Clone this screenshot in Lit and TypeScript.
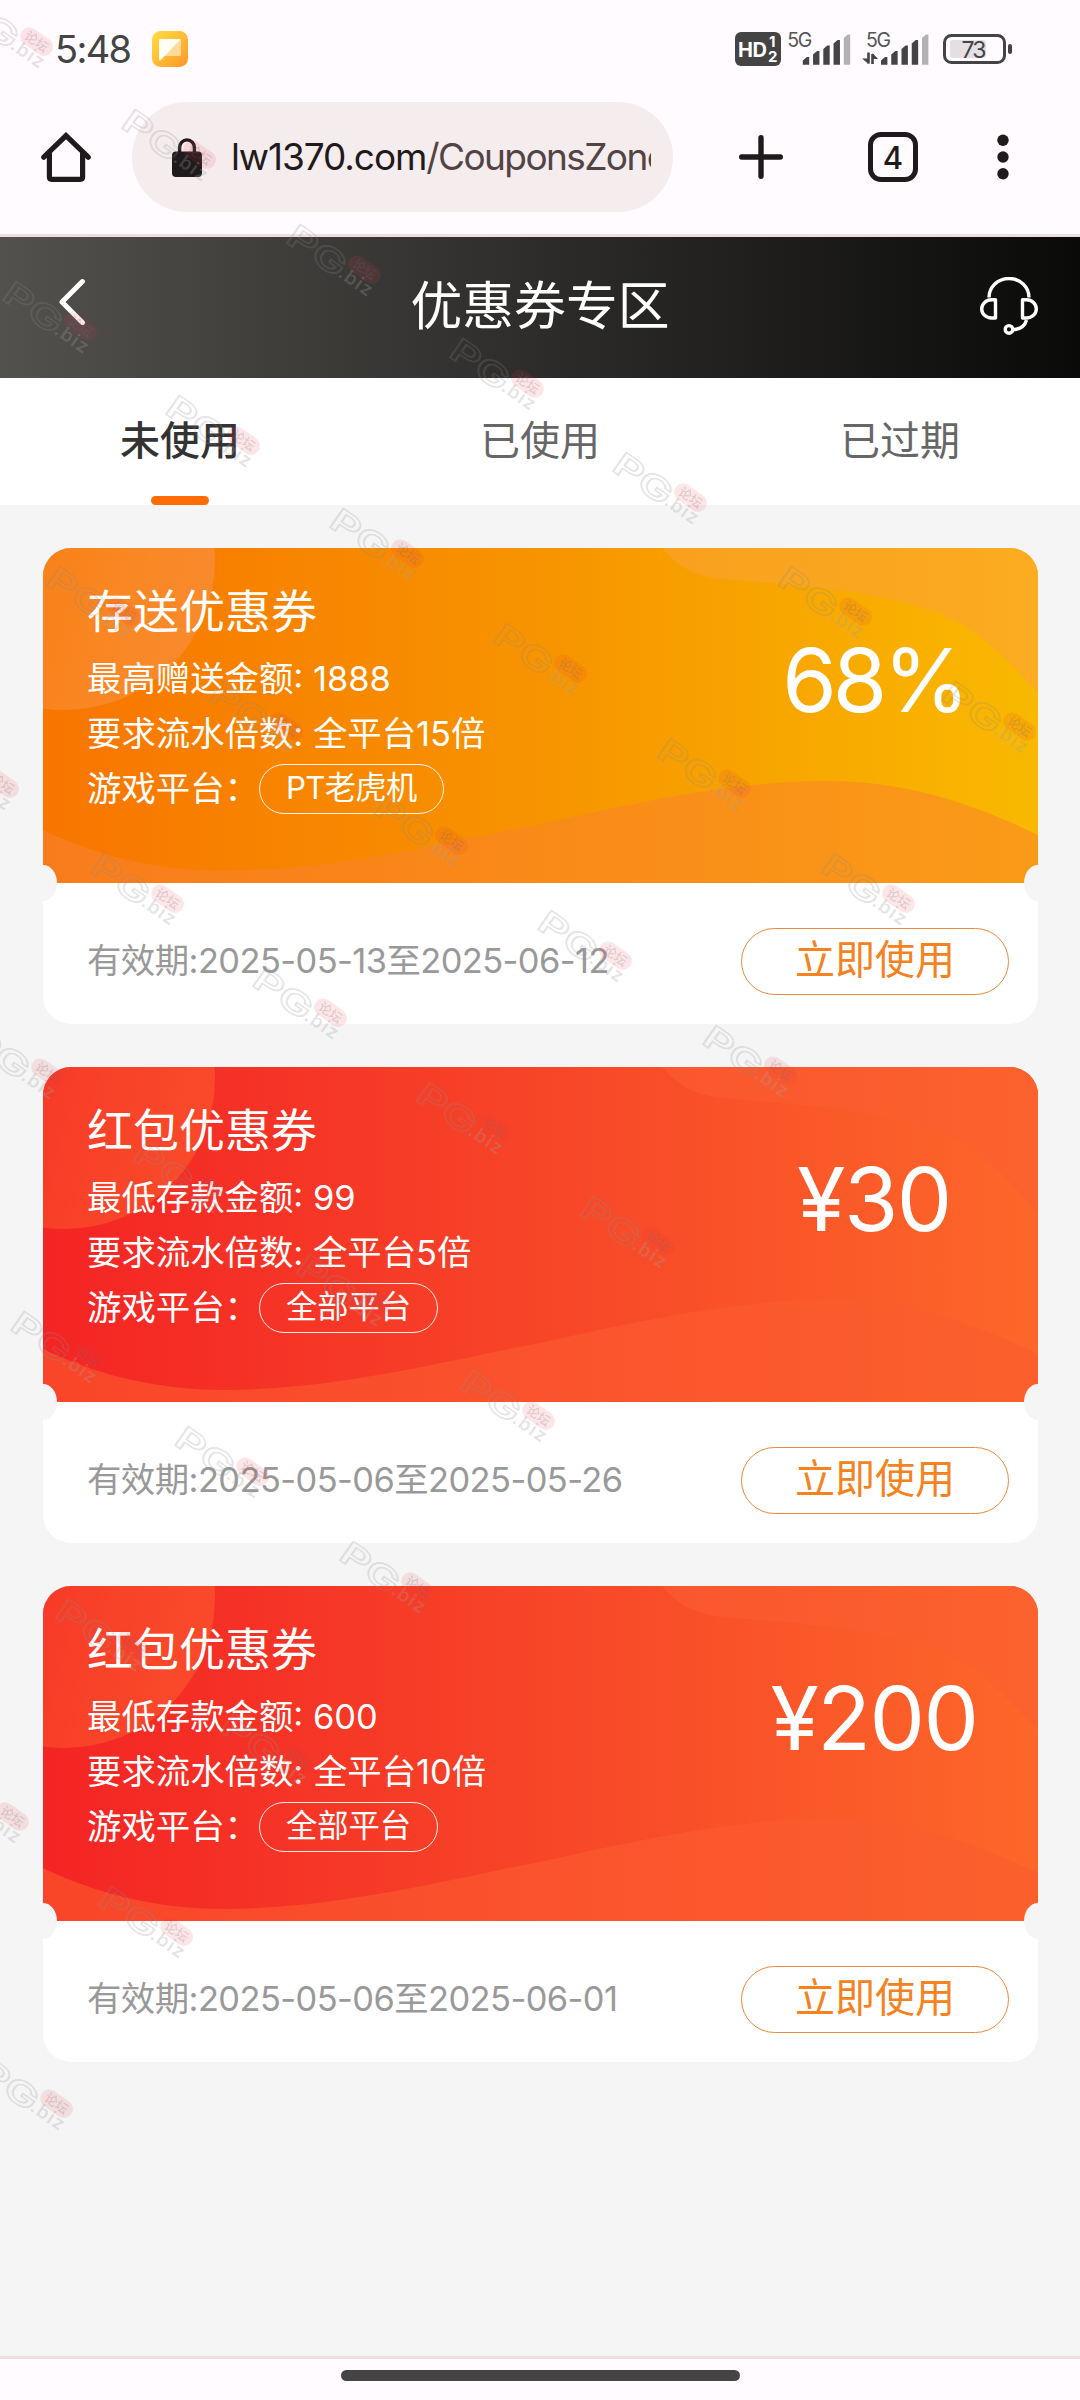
import { LitElement, html, css, svg } from "lit";
import { customElement, property, state } from "lit/decorators.js";
import { classMap } from "lit/directives/class-map.js";

interface Coupon {
  kind: "orange" | "red";
  title: string;
  lines: string[];
  platform: string;
  value: string;
  period: string;
}

const COUPONS: Coupon[] = [
  {
    kind: "orange",
    title: "存送优惠券",
    lines: ["最高赠送金额: 1888", "要求流水倍数: 全平台15倍"],
    platform: "PT老虎机",
    value: "68%",
    period: "2025-05-13至2025-06-12",
  },
  {
    kind: "red",
    title: "红包优惠券",
    lines: ["最低存款金额: 99", "要求流水倍数: 全平台5倍"],
    platform: "全部平台",
    value: "¥30",
    period: "2025-05-06至2025-05-26",
  },
  {
    kind: "red",
    title: "红包优惠券",
    lines: ["最低存款金额: 600", "要求流水倍数: 全平台10倍"],
    platform: "全部平台",
    value: "¥200",
    period: "2025-05-06至2025-06-01",
  },
];

const PALETTE = {
  orange: {
    base: ["#f87500", "#f79400", "#f9b900"],
    wave: ["#f97c1c", "#f98a18", "#fa9b18"],
    top: ["#f9a01e", "#fbac20"],
    disc: "#f98a2c",
  },
  red: {
    base: ["#f42424", "#f74528", "#fd6729"],
    wave: ["#f94529", "#fa532d", "#fb602c"],
    top: ["#fa562e", "#fc622d"],
    disc: "#f94a2a",
  },
};

const FONT = css`"Inter", "Noto Sans CJK SC", sans-serif`;

@customElement("status-bar")
class StatusBar extends LitElement {
  static styles = css`
    :host {
      display: flex;
      align-items: center;
      height: 98px;
      padding: 0 68px 0 55px;
      box-sizing: border-box;
      font-family: ${FONT};
      color: #444;
    }
    svg { display: block; flex: none; }
    text { font-family: ${FONT}; }
    .time { width: 97px; font-size: 38px; letter-spacing: -1.7px; line-height: 50px; white-space: nowrap; }
    .icons { display: flex; align-items: center; margin-left: auto; }
    .hd { margin-right: 6px; }
    .sim { margin-right: 11px; }
    .sim2 { margin-right: 14px; }
  `;

  private bars(x: number) {
    const tops = [57, 51, 45.5, 40, 34.5];
    return tops.map((t, i) => {
      const l = x + i * 10.25;
      return svg`<path d="M${l} ${t + 3.5 - 32}L${l + 4} ${t - 32}H${l + 6.4}V${64.7 - 32}H${l}Z" fill=${i === 4 ? "#b3b1b4" : "#444"} />`;
    });
  }

  render() {
    return html`
      <div class="time">5:48</div>
      <svg width="36" height="36" viewBox="0 0 36 36">
        <defs>
          <linearGradient id="note" x1="0" y1="0" x2="1" y2="1">
            <stop offset="0" stop-color="#ffdf45" /><stop offset=".5" stop-color="#ffbb35" /><stop offset="1" stop-color="#ff9628" />
          </linearGradient>
        </defs>
        <rect width="36" height="36" rx="8.5" fill="url(#note)" />
        <rect x="7" y="8" width="22" height="17" rx="1.5" fill="#fff" opacity=".5" />
        <path d="M8.5 8H28.6L8.6 29.2Q7 30 7 28V9.5Q7 8 8.5 8Z" fill="#fffdf4" />
      </svg>
      <div class="icons">
        <svg class="hd" width="46" height="34" viewBox="0 0 46 34">
          <rect width="46" height="34" rx="6" fill="#444" />
          <text x="3" y="24.5" font-size="20" font-weight="700" fill="#fff" textLength="29">HD</text>
          <text x="34" y="15" font-size="15" font-weight="700" fill="#fff">1</text>
          <text x="33" y="30" font-size="15" font-weight="700" fill="#fff">2</text>
        </svg>
        <svg class="sim" width="64" height="50" viewBox="0 -8 64 50">
          <text x=".2" y="14.6" font-size="19.5" fill="#555" textLength="25">5G</text>
          ${this.bars(15.8)}
        </svg>
        <svg class="sim2" width="67" height="50" viewBox="0 -8 67 50">
          <text x="4" y="14.6" font-size="19.5" fill="#555" textLength="25">5G</text>
          <path d="M6.5 20.5V31.5M10.5 32V22" stroke="#444" stroke-width="2.6" />
          <path d="M0 26.5H6.5V32ZM10.5 21V27H16Z" fill="#444" />
          ${this.bars(19)}
        </svg>
        <svg width="69" height="30" viewBox="0 0 69 30">
          <rect x="1.5" y="1.5" width="60" height="27" rx="7" fill="none" stroke="#444" stroke-width="3" />
          <rect x="7" y="6" width="36" height="18" rx="3" fill="#e3dfe4" />
          <rect x="65" y="10" width="4" height="10" rx="2" fill="#444" />
          <text x="18.5" y="23.6" font-size="23" fill="#444" textLength="25">73</text>
        </svg>
      </div>
    `;
  }
}

@customElement("browser-bar")
class BrowserBar extends LitElement {
  static styles = css`
    :host {
      display: flex;
      align-items: center;
      height: 136px;
      padding: 0 0 18px 41px;
      box-sizing: border-box;
      font-family: ${FONT};
      color: #1f1a1b;
    }
    svg { display: block; flex: none; }
    .url {
      display: flex;
      align-items: center;
      width: 541px;
      height: 110px;
      margin: 0 66px 0 41px;
      padding: 0 22px 0 40px;
      box-sizing: border-box;
      border-radius: 55px;
      background: #f5ecee;
    }
    .address {
      flex: 1;
      min-width: 0;
      margin-left: 29px;
      overflow: hidden;
      white-space: nowrap;
      font-size: 37px;
      letter-spacing: -1.1px;
      line-height: 50px;
    }
    .path { color: #524345; letter-spacing: -1.6px; }
    .plus { margin-right: 85px; }
    .count {
      display: flex;
      align-items: center;
      justify-content: center;
      width: 50px;
      height: 50px;
      margin-right: 79px;
      box-sizing: border-box;
      border: 5.5px solid #1f1a1b;
      border-radius: 13px;
      font-size: 31px;
      font-weight: 500;
    }
  `;

  render() {
    return html`
      <svg width="50" height="50" viewBox="0 0 50 50" fill="none" stroke="#1f1a1b" stroke-width="5.2" stroke-linecap="round" stroke-linejoin="round">
        <path d="M2.8 25.2L25 3.6L47.2 25.2" stroke-linejoin="miter" />
        <path d="M8.4 22V45Q8.4 47.3 10.7 47.3H39.3Q41.6 47.3 41.6 45V22" />
      </svg>
      <div class="url">
        <svg width="30" height="39" viewBox="0 0 30 39">
          <path d="M7.6 16V9.5A7.4 7.6 0 0 1 22.4 9.5V16" fill="none" stroke="#1f1a1b" stroke-width="3.4" />
          <rect y="13.5" width="30" height="25.5" rx="4" fill="#1f1a1b" />
        </svg>
        <div class="address">lw1370.com<span class="path">/CouponsZone</span></div>
      </div>
      <svg class="plus" width="44" height="44" viewBox="0 0 44 44" stroke="#1f1a1b" stroke-width="5.4" stroke-linecap="round">
        <path d="M22 2.7V41.3M2.7 22H41.3" />
      </svg>
      <div class="count">4</div>
      <svg width="12" height="46" viewBox="0 0 12 46" fill="#1f1a1b">
        <circle cx="6" cy="6.3" r="5.7" /><circle cx="6" cy="23" r="5.7" /><circle cx="6" cy="39.7" r="5.7" />
      </svg>
    `;
  }
}

@customElement("coupon-card")
class CouponCard extends LitElement {
  @property({ attribute: false }) coupon!: Coupon;

  static styles = css`
    :host {
      display: block;
      position: relative;
      height: 476px;
      border-radius: 28px;
      overflow: hidden;
      background: #fff;
      font-family: ${FONT};
    }
    .face {
      position: relative;
      display: flex;
      justify-content: space-between;
      height: 335px;
      color: #fff;
    }
    .art { position: absolute; inset: 0; display: block; }
    .info { position: relative; padding: 33px 0 0 44px; white-space: nowrap; }
    .title { height: 60px; line-height: 60px; font-size: 46px; font-weight: 400; margin: 0 0 10px; }
    .line { display: flex; align-items: center; height: 55.2px; line-height: 55px; font-size: 34.4px; white-space: pre; }
    .tag {
      display: inline-flex;
      align-items: center;
      height: 50px;
      padding: 0 26px;
      box-sizing: border-box;
      border: 1.5px solid rgba(255, 255, 255, 0.9);
      border-radius: 25px;
      font-size: 31.3px;
    }
    .orange .tag { letter-spacing: -0.7px; }
    .value { position: relative; width: 328px; padding: 72px 0 0; line-height: 120px; text-align: center; font-size: 88px; letter-spacing: -1.5px; }
    .orange .value { letter-spacing: -4px; }
    .foot { display: flex; align-items: center; justify-content: space-between; height: 141px; padding: 15px 29px 0 44px; box-sizing: border-box; }
    .period { font-size: 34.4px; letter-spacing: -0.55px; line-height: 50px; color: #999; }
    .use {
      width: 268px;
      height: 67px;
      padding: 0 0 3px;
      border: 1.5px solid #ee8a3c;
      border-radius: 34px;
      background: #fff;
      color: #f58220;
      font: 400 40px/62px ${FONT};
    }
    .notch { position: absolute; top: 317px; width: 28px; height: 36px; border-radius: 50%; background: #f5f5f5; }
    .notch.left { left: -14px; }
    .notch.right { right: -14px; }
  `;

  private art() {
    const p = PALETTE[this.coupon.kind];
    return html`
      <svg class="art" width="995" height="335" viewBox="0 0 995 335">
        <defs>
          <linearGradient id="base">
            <stop offset="0" stop-color=${p.base[0]} /><stop offset=".5" stop-color=${p.base[1]} /><stop offset="1" stop-color=${p.base[2]} />
          </linearGradient>
          <linearGradient id="wave">
            <stop offset="0" stop-color=${p.wave[0]} /><stop offset=".5" stop-color=${p.wave[1]} /><stop offset="1" stop-color=${p.wave[2]} />
          </linearGradient>
          <linearGradient id="top">
            <stop offset="0" stop-color=${p.top[0]} /><stop offset="1" stop-color=${p.top[1]} />
          </linearGradient>
          <linearGradient id="disc" x1="0" y1=".3" x2="1" y2=".6">
            <stop offset="0" stop-color=${p.disc} stop-opacity=".25" /><stop offset="1" stop-color=${p.disc} />
          </linearGradient>
        </defs>
        <rect width="995" height="335" fill="url(#base)" />
        <circle cx="22" cy="12" r="150" fill="url(#disc)" />
        <path d="M619 0C637 20 652 28 680 31C730 35 770 38 800 43C850 50 890 60 920 77C955 100 975 124 995 145V0Z" fill="url(#top)" />
        <path d="M0 282C50 306 110 323 181 323C300 323 420 290 497 276C590 255 690 233 783 233C860 233 925 253 995 287V335H0Z" fill="url(#wave)" />
      </svg>
    `;
  }

  render() {
    const c = this.coupon;
    return html`
      <div class="face ${c.kind}">
        ${this.art()}
        <div class="info">
          <h2 class="title">${c.title}</h2>
          ${c.lines.map((l) => html`<div class="line">${l}</div>`)}
          <div class="line">游戏平台：<span class="tag">${c.platform}</span></div>
        </div>
        <div class="value">${c.value}</div>
      </div>
      <div class="foot">
        <span class="period">有效期:${c.period}</span>
        <button class="use">立即使用</button>
      </div>
      <i class="notch left"></i>
      <i class="notch right"></i>
    `;
  }
}

const MARKS: [number, number][] = [
  [-42, -7], [121, 106], [286, 221], [449, 335], [612, 449], [777, 563], [941, 678],
  [2, 278], [165, 392], [329, 505], [492, 620], [656, 735], [820, 850],
  [45, 563], [208, 678], [373, 792], [537, 907], [702, 1022],
  [-76, 735], [89, 850], [252, 964], [416, 1079], [580, 1193],
  [-31, 1024], [133, 1138], [296, 1251], [460, 1367],
  [10, 1308], [174, 1423], [339, 1538],
  [55, 1596], [220, 1710],
  [-66, 1768], [98, 1883],
  [-22, 2055],
];

@customElement("water-mark")
class WaterMark extends LitElement {
  static styles = css`
    :host { position: absolute; inset: 0; pointer-events: none; overflow: hidden; }
    svg { display: block; }
    .logo { font: 600 32px ${FONT}; fill: none; stroke: rgba(140, 140, 140, 0.24); stroke-width: 1.5px; }
    .biz { font: 600 19px ${FONT}; fill: rgba(160, 160, 160, 0.28); }
    .forum { font: 500 13px ${FONT}; fill: rgba(110, 110, 110, 0.24); }
    .pill { fill: rgba(240, 50, 65, 0.12); }
  `;

  render() {
    return html`
      <svg width="1080" height="2400" viewBox="0 0 1080 2400">
        ${MARKS.map(
          ([x, y]) => svg`
            <g transform="translate(${x - 1} ${y + 21}) rotate(35)">
              <text class="logo" x="-1" y="0" textLength="65" lengthAdjust="spacingAndGlyphs">PG</text>
              <rect class="pill" x="63" y="-32" width="36" height="18" rx="9" />
              <text class="forum" x="68" y="-18.2">论坛</text>
              <text class="biz" x="62" y="-2" textLength="37">.biz</text>
            </g>`,
        )}
      </svg>
    `;
  }
}

@customElement("app-root")
class AppRoot extends LitElement {
  @state() private tab = 0;

  static styles = css`
    :host {
      display: flex;
      flex-direction: column;
      position: relative;
      width: 1080px;
      height: 2400px;
      overflow: hidden;
      background: #fffbff;
      font-family: ${FONT};
    }
    .header {
      display: grid;
      grid-template-columns: 1fr auto 1fr;
      align-items: center;
      height: 144px;
      box-sizing: border-box;
      border-top: 3px solid #efdedb;
      background: linear-gradient(90deg, #52514e, #2d2c2a 50%, #0a0a08) padding-box;
    }
    .header svg { display: block; }
    .back { margin: -11px 0 0 58px; }
    .title { margin: -3px 0 0; color: #fff; font-size: 51.8px; font-weight: 400; line-height: 70px; }
    .service { justify-self: end; margin: -4px 42px 0 0; }
    .tabs { display: grid; grid-template-columns: repeat(3, 1fr); height: 127px; background: #fff; }
    .tab {
      display: flex;
      flex-direction: column;
      align-items: center;
      justify-content: space-between;
      padding: 33px 0 0;
      border: 0;
      background: none;
      color: #666;
      font: 400 40px/60px ${FONT};
    }
    .tab::after { content: ""; width: 58px; height: 9px; border-radius: 4.5px; }
    .tab.on { color: #333; font-weight: 500; }
    .tab.on::after { background: #ff6c05; }
    .list { flex: 1; display: flex; flex-direction: column; gap: 43px; padding: 43px 42px 0 43px; background: #f5f5f5; }
    .nav { height: 44px; box-sizing: border-box; padding-top: 11px; border-top: 3px solid #f0dedb; }
    .handle { width: 399px; height: 11px; margin: 0 auto; border-radius: 5.5px; background: #444; }
  `;

  render() {
    return html`
      <status-bar></status-bar>
      <browser-bar></browser-bar>
      <header class="header">
        <svg class="back" width="28" height="46" viewBox="0 0 28 46" fill="none" stroke="#fff" stroke-width="5" stroke-linecap="round" stroke-linejoin="round">
          <path d="M24.4 2.6L4 23L24.4 43.6" />
        </svg>
        <h1 class="title">优惠券专区</h1>
        <svg class="service" width="58" height="58" viewBox="0 0 58 58" fill="none" stroke="#fff" stroke-width="3.4" stroke-linejoin="round">
          <path d="M9 20.5A20 19 0 0 1 49 20.5" />
          <path d="M15.5 22.8V41H11.5A9.8 9.1 0 0 1 11.5 22.8Z" />
          <path d="M42.5 22.8V41H46.5A9.8 9.1 0 0 0 46.5 22.8Z" />
          <path d="M46.5 43Q44 52 33.5 52.6" />
          <circle cx="29" cy="52.4" r="3.8" />
        </svg>
      </header>
      <nav class="tabs">
        ${["未使用", "已使用", "已过期"].map(
          (t, i) => html`<button class=${classMap({ tab: true, on: i === this.tab })} @click=${() => (this.tab = i)}>${t}</button>`,
        )}
      </nav>
      <main class="list">${COUPONS.map((c) => html`<coupon-card .coupon=${c}></coupon-card>`)}</main>
      <footer class="nav"><div class="handle"></div></footer>
      <water-mark></water-mark>
    `;
  }
}
